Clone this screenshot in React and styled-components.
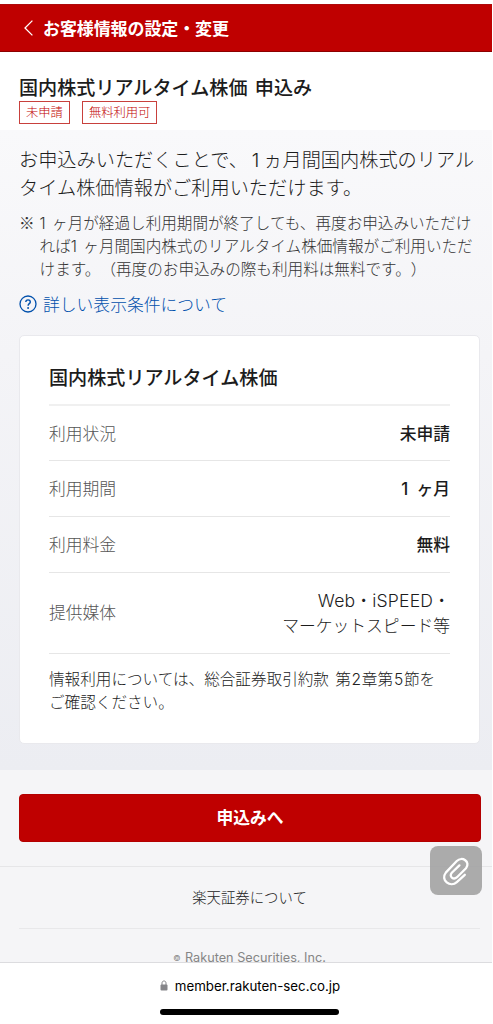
import React from 'react';
import styled, { createGlobalStyle } from 'styled-components';

const GlobalStyle = createGlobalStyle`
    * {
        box-sizing: border-box;
    }
    body {
        margin: 0;
        background: #fff;
        color: #1c1c1c;
        font-family: 'Noto Sans CJK JP', sans-serif;
        font-weight: 300;
        text-spacing-trim: space-all;
    }
    h1, h2, p, ul {
        margin: 0;
        padding: 0;
    }
`;

const Screen = styled.div`
    position: relative;
    display: flex;
    flex-direction: column;
    width: 492px;
    height: 1024px;
    overflow: hidden;
`;

const Page = styled.div`
    height: 962px;
    padding-top: 4px;
    overflow: hidden;
`;

const Header = styled.header`
    display: flex;
    align-items: center;
    gap: 10px;
    height: 48px;
    padding: 0 24px 1px;
    background: #bf0000;
    border-top: 1px solid #ae0a0c;
    border-bottom: 1px solid #8c0000;
    color: #fff;
    font-size: 17px;
    font-weight: 700;
    letter-spacing: -0.1px;
    white-space: nowrap;
`;

const TitleArea = styled.section`
    height: 78px;
    padding: 21px 19px 0;
`;

const Title = styled.h1`
    font-size: 19.1px;
    font-weight: 500;
    line-height: 28px;
    word-spacing: 3px;
`;

const Badges = styled.div`
    display: flex;
    gap: 12px;
`;

const Badge = styled.span`
    height: 23px;
    padding: 0 6px;
    border: 1px solid #c8403c;
    color: #bf0000;
    font-size: 12.3px;
    line-height: 21px;
`;

const Content = styled.main`
    height: 640px;
    padding: 15px 12px 0 19px;
    background: linear-gradient(#f9f9fb, #f4f4f7 35%, #ecedf2);
`;

const Line = styled.span`
    display: block;
    white-space: nowrap;
`;

const Lead = styled.p`
    font-size: 19.2px;
    line-height: 28.4px;
`;

const Note = styled.div`
    display: flex;
    gap: 5px;
    margin-top: 9px;
    color: #333;
    font-size: 15.6px;
    line-height: 23px;
`;

const HelpLink = styled.a`
    display: flex;
    align-items: center;
    gap: 6px;
    height: 26px;
    margin-top: 11px;
    color: #0050ac;
    font-size: 16.8px;
`;

const Card = styled.section`
    width: 461px;
    height: 409px;
    margin-top: 18px;
    padding: 26px 29px 0;
    background: #fff;
    border: 1px solid #e9e9ed;
    border-radius: 5px;
`;

const CardTitle = styled.h2`
    height: 44px;
    border-bottom: 2px solid #f0f0f0;
    font-size: 19.1px;
    font-weight: 500;
    line-height: 30px;
`;

const Row = styled.div`
    display: flex;
    align-items: center;
    justify-content: space-between;
    height: ${(props) => (props.$tall ? '81px' : '55.6px')};
    border-bottom: 1px solid #e6e6e6;
    font-size: 16.8px;
    line-height: 25px;
`;

const Label = styled.span`
    color: #555;
`;

const Value = styled.span`
    font-weight: ${(props) => (props.$strong ? 500 : 300)};
    text-align: right;
    white-space: nowrap;
    word-spacing: 2px;
`;

const Latin = styled.span`
    font-family: Inter, sans-serif;
    font-size: 17.6px;
    line-height: 1;
    letter-spacing: 0.2px;
`;

const Digit = styled.span`
    display: inline-block;
    min-width: ${(props) => props.$width || 0.7}em;
    font-family: Inter, sans-serif;
    line-height: 1;
    text-align: ${(props) => props.$align || 'center'};
`;

const Terms = styled.p`
    margin-top: 13px;
    color: #222;
    font-size: 15.6px;
    line-height: 23px;
    word-spacing: 3px;
`;

const Actions = styled.section`
    height: 97px;
    padding: 24px 11px 0 19px;
    background: #f5f5f7;
    border-bottom: 1px solid #e6e6e8;
`;

const ApplyButton = styled.button`
    display: block;
    width: 462px;
    height: 48px;
    padding: 0 0 2px;
    border: 1px solid #b30000;
    border-radius: 4px;
    background: #bf0000;
    color: #fff;
    font: 700 16.8px 'Noto Sans CJK JP', sans-serif;
`;

const Footer = styled.footer`
    height: 95px;
    padding: 0 12px 0 19px;
    background: #f5f5f7;
    text-align: center;
`;

const FooterLink = styled.div`
    height: 62px;
    border-bottom: 1px solid #e8e8ea;
    color: #222;
    font-size: 14.4px;
    line-height: 59px;
`;

const Copyright = styled.div`
    padding-top: 20px;
    color: #858585;
    font: 400 12.7px/18px Inter, sans-serif;
    white-space: nowrap;

    small {
        margin-right: 1px;
        font-size: 8px;
        vertical-align: 1px;
    }
`;

const BrowserBar = styled.div`
    display: flex;
    flex-direction: column;
    align-items: center;
    height: 62px;
    border-top: 1px solid #dcdcdf;
    background: #fff;
`;

const Address = styled.div`
    display: flex;
    align-items: center;
    gap: 7px;
    height: 46px;
    margin-left: 8px;
    padding-bottom: 1px;
    color: #000;
    font: 400 13.3px Inter, sans-serif;
`;

const HomeIndicator = styled.div`
    width: 179px;
    height: 6px;
    margin-left: 7px;
    border-radius: 3px;
    background: #000;
`;

const AttachButton = styled.button`
    position: absolute;
    top: 846px;
    left: 430px;
    display: flex;
    align-items: center;
    justify-content: center;
    width: 52px;
    height: 49px;
    padding: 0;
    border: 0;
    border-radius: 8px;
    background: rgba(160, 160, 160, 0.88);
`;

const rows = [
    { label: '利用状況', value: '未申請' },
    {
        label: '利用期間',
        value: (
            <>
                <Digit $width={0.72}>1</Digit> ヶ月
            </>
        ),
    },
    { label: '利用料金', value: '無料' },
];

const BackIcon = () => (
    <svg width='9' height='16' viewBox='0 0 9 16' fill='none' stroke='#fff' strokeWidth='1.3'>
        <path d='M8.4 0.6L1 8L8.4 15.4' />
    </svg>
);

const HelpIcon = () => (
    <svg width='18' height='18' viewBox='0 0 18 18' fill='none' stroke='#0050ac'>
        <circle cx='9' cy='9' r='8' strokeWidth='1.3' />
        <path d='M6.8 7.1C6.8 4.1 11.3 4.2 11.3 6.9C11.3 8.6 9.1 8.7 9.1 10.7' strokeWidth='1.4' />
        <circle cx='9.1' cy='13' r='0.95' fill='#0050ac' stroke='none' />
    </svg>
);

const LockIcon = () => (
    <svg width='8' height='11' viewBox='0 0 8 11'>
        <rect x='0.5' y='4.6' width='7' height='6' rx='1' fill='#858589' />
        <path d='M2 5V3C2 0.3 6 0.3 6 3V5' fill='none' stroke='#858589' strokeWidth='1' />
    </svg>
);

const ClipIcon = () => (
    <svg
        width='28'
        height='30'
        viewBox='0 0 28 30'
        fill='none'
        stroke='#fff'
        strokeWidth='2.3'
        strokeLinecap='round'
        strokeLinejoin='round'
    >
        <path d='M22.8 18.8L14.8 26.2C8.5 31.8 -2.2 24.2 4 16.4L14.8 5C20 -0.2 29 5.8 24 12.2L15 21.2C11.4 24.4 6.6 20.4 9.8 16.8L17.4 9.4' />
    </svg>
);

export default function App() {
    return (
        <Screen>
            <GlobalStyle />
            <Page>
                <Header>
                    <BackIcon />
                    お客様情報の設定・変更
                </Header>
                <TitleArea>
                    <Title>国内株式リアルタイム株価 申込み</Title>
                    <Badges>
                        <Badge>未申請</Badge>
                        <Badge>無料利用可</Badge>
                    </Badges>
                </TitleArea>
                <Content>
                    <Lead>
                        <Line>
                            お申込みいただくことで、<Digit $width={0.8}>1</Digit>ヵ月間国内株式のリアル
                        </Line>
                        <Line>タイム株価情報がご利用いただけます。</Line>
                    </Lead>
                    <Note>
                        <span>※</span>
                        <p>
                            <Line>
                                <Digit $width={0.8} $align='left'>1</Digit>
                                ヶ月が経過し利用期間が終了しても、再度お申込みいただけ
                            </Line>
                            <Line>
                                れば
                                <Digit $width={0.8} $align='left'>1</Digit>
                                ヶ月間国内株式のリアルタイム株価情報がご利用いただ
                            </Line>
                            <Line>けます。（再度のお申込みの際も利用料は無料です。）</Line>
                        </p>
                    </Note>
                    <HelpLink>
                        <HelpIcon />
                        詳しい表示条件について
                    </HelpLink>
                    <Card>
                        <CardTitle>国内株式リアルタイム株価</CardTitle>
                        {rows.map((row) => (
                            <Row key={row.label}>
                                <Label>{row.label}</Label>
                                <Value $strong>{row.value}</Value>
                            </Row>
                        ))}
                        <Row $tall>
                            <Label>提供媒体</Label>
                            <Value>
                                <Line>
                                    <Latin>Web</Latin>・<Latin>iSPEED</Latin>・
                                </Line>
                                <Line>マーケットスピード等</Line>
                            </Value>
                        </Row>
                        <Terms>
                            <Line>
                                情報利用については、総合証券取引約款 第<Digit>2</Digit>章第
                                <Digit>5</Digit>節を
                            </Line>
                            <Line>ご確認ください。</Line>
                        </Terms>
                    </Card>
                </Content>
                <Actions>
                    <ApplyButton>申込みへ</ApplyButton>
                </Actions>
                <Footer>
                    <FooterLink>楽天証券について</FooterLink>
                    <Copyright>
                        <small>©</small> Rakuten Securities, Inc.
                    </Copyright>
                </Footer>
            </Page>
            <BrowserBar>
                <Address>
                    <LockIcon />
                    member.rakuten-sec.co.jp
                </Address>
                <HomeIndicator />
            </BrowserBar>
            <AttachButton aria-label='添付'>
                <ClipIcon />
            </AttachButton>
        </Screen>
    );
}
